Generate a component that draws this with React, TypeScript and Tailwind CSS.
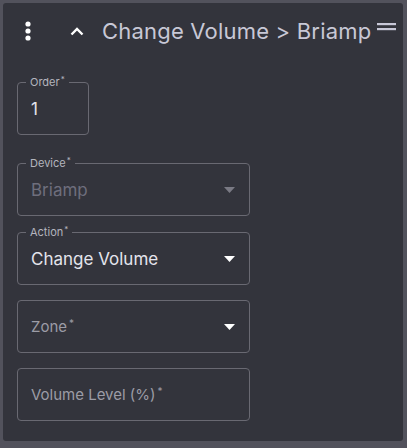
import React from "react";

function Field({
  label,
  value,
  placeholder,
  width = "w-[233px]",
  arrow,
  muted,
}: {
  label: string;
  value?: string;
  placeholder?: boolean;
  width?: string;
  arrow?: "white" | "gray";
  muted?: boolean;
}) {
  return (
    <div className={`relative flex h-[53px] ${width} items-center rounded-[4px] border border-[#696972] pl-[13px] pr-[14px]`}>
      {!placeholder && (
        <span className="absolute -top-[8px] left-[8px] bg-[#33343c] px-[4px] text-[11px] leading-[14px] text-[#b4b4be]">
          {label}
          <sup className="ml-[1px] text-[8px]">*</sup>
        </span>
      )}
      {placeholder ? (
        <span className="flex-1 pt-[1px] text-[15px] text-[#9c9ca6]">
          {label}
          <sup className="ml-[2px] text-[10px]">*</sup>
        </span>
      ) : (
        <span className={`flex-1 pt-[2px] text-[17px] ${muted ? "text-[#6e6e7c]" : "text-[#e4e4ec]"}`}>{value}</span>
      )}
      {arrow && (
        <svg width="11" height="6" viewBox="0 0 11 6" className="mt-[1px]">
          <path d="M0 0 L11 0 L5.5 6 Z" fill={arrow === "white" ? "#ffffff" : "#7a7a84"} />
        </svg>
      )}
    </div>
  );
}

export default function App() {
  return (
    <div className="h-[448px] w-[407px] bg-[#52525c] p-[3px]" style={{ fontFamily: "Inter, 'Noto Sans', sans-serif" }}>
      <div className="h-[438px] w-[400px] rounded-[3px] bg-[#33343c]">
        <div className="flex h-[54px] items-center pl-[21px] pt-[2px]">
          <svg width="8" height="20" viewBox="0 0 8 20">
            <circle cx="4" cy="3" r="2.6" fill="#ffffff" />
            <circle cx="4" cy="10" r="2.6" fill="#ffffff" />
            <circle cx="4" cy="17" r="2.6" fill="#ffffff" />
          </svg>
          <svg width="14" height="9" viewBox="0 0 14 9" className="ml-[38px]">
            <path d="M1.5 7.5 L7 2 L12.5 7.5" stroke="#ffffff" strokeWidth="2.4" fill="none" />
          </svg>
          <span className="ml-[18px] whitespace-nowrap text-[22px] tracking-[0.2px] text-[#c8c8d6]">Change Volume &gt; Briamp</span>
          <svg width="19" height="8" viewBox="0 0 19 8" className="mb-[9px] ml-[6px]">
            <rect x="0" y="0" width="19" height="2.2" fill="#c8c8d8" />
            <rect x="0" y="5" width="19" height="2.2" fill="#c8c8d8" />
          </svg>
        </div>
        <div className="flex flex-col pl-[14px] pt-[25px]">
          <Field label="Order" value="1" width="w-[72px]" />
          <div className="mt-[28px]">
            <Field label="Device" value="Briamp" arrow="gray" muted />
          </div>
          <div className="mt-[16px]">
            <Field label="Action" value="Change Volume" arrow="white" />
          </div>
          <div className="mt-[15px]">
            <Field label="Zone" placeholder arrow="white" />
          </div>
          <div className="mt-[15px]">
            <Field label="Volume Level (%)" placeholder />
          </div>
        </div>
      </div>
    </div>
  );
}
